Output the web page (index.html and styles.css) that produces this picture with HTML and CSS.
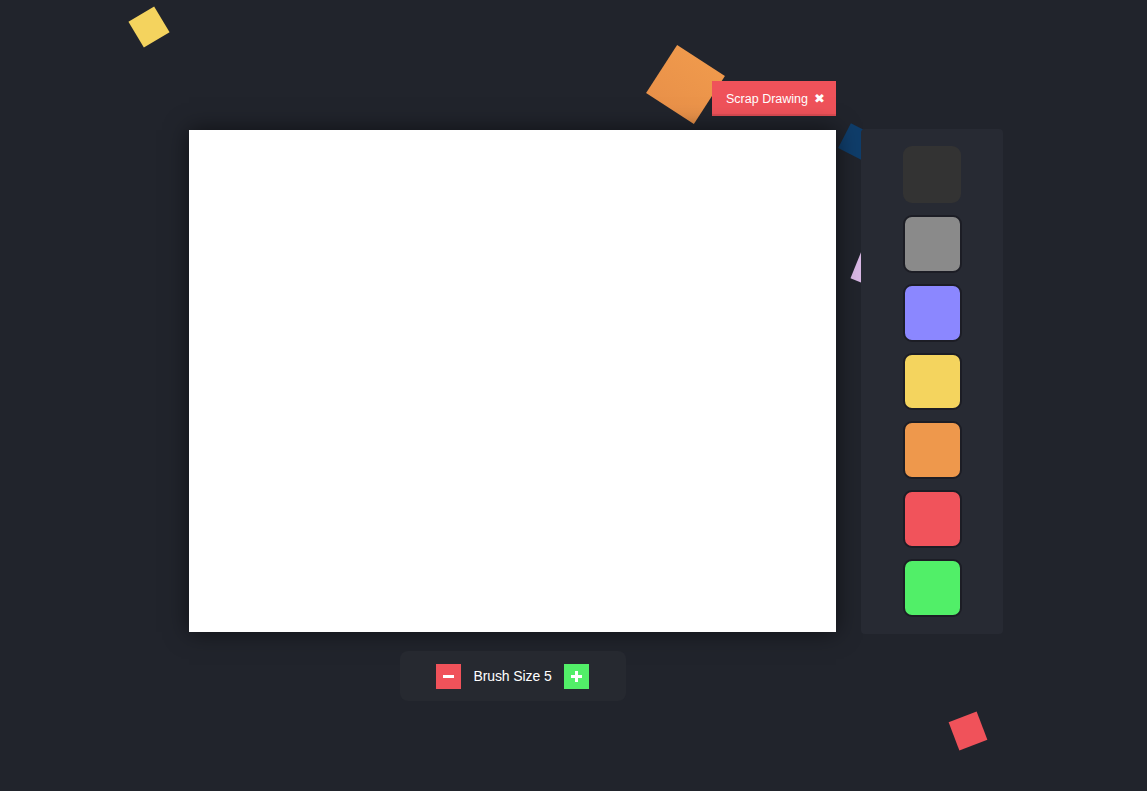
FILE: index.html
```html
<!DOCTYPE html>
<html lang="en">
<head>
<meta charset="utf-8">
<title>Drawing</title>
<link rel="stylesheet" href="styles.css">
</head>
<body>
<div class="shapes">
  <div class="shape shape-yellow"></div>
  <div class="shape shape-orange"></div>
  <div class="shape shape-blue"></div>
  <div class="shape shape-lilac"></div>
  <div class="shape shape-red"></div>
</div>
<main class="app">
  <section class="board">
    <button class="scrap">Scrap Drawing <span class="scrap-x">&#10006;</span></button>
    <div class="canvas"></div>
    <div class="brush">
      <button class="brush-btn minus" aria-label="decrease"><span class="bar"></span></button>
      <span class="brush-label">Brush Size 5</span>
      <button class="brush-btn plus" aria-label="increase"><span class="bar"></span><span class="bar vertical"></span></button>
    </div>
  </section>
  <aside class="palette">
    <div class="swatch sw-dark selected"></div>
    <div class="swatch sw-grey"></div>
    <div class="swatch sw-purple"></div>
    <div class="swatch sw-yellow"></div>
    <div class="swatch sw-orange"></div>
    <div class="swatch sw-red"></div>
    <div class="swatch sw-green"></div>
  </aside>
</main>
</body>
</html>
```

FILE: styles.css
```css
html, body {
  margin: 0;
  padding: 0;
}
body {
  background: #21242c;
  width: 1147px;
  height: 791px;
  overflow: hidden;
  font-family: "Liberation Sans", Arial, sans-serif;
  position: relative;
}

.shapes {
  position: absolute;
  inset: 0;
  z-index: 0;
}
.shape {
  position: absolute;
}
.shape-yellow {
  left: 134px;
  top: 12px;
  width: 30px;
  height: 30px;
  background: #f4d35e;
  transform: rotate(-31deg);
}
.shape-orange {
  left: 657px;
  top: 56px;
  width: 57px;
  height: 57px;
  background: linear-gradient(#ef994c, #e99149);
  transform: rotate(33deg);
}
.shape-blue {
  left: 843px;
  top: 128px;
  width: 28px;
  height: 28px;
  background: #0f3d6a;
  transform: rotate(27deg);
}
.shape-lilac {
  left: 855px;
  top: 255px;
  width: 30px;
  height: 30px;
  background: #dab9e6;
  transform: rotate(22deg);
}
.shape-red {
  left: 953px;
  top: 716px;
  width: 30px;
  height: 30px;
  background: #f0525a;
  transform: rotate(-21deg);
}

.app {
  position: relative;
  z-index: 1;
  display: flex;
  align-items: flex-start;
  gap: 25px;
  padding: 81px 0 0 189px;
}

.board {
  display: flex;
  flex-direction: column;
  width: 647px;
}

.scrap {
  align-self: flex-end;
  height: 35px;
  width: 124px;
  margin: 0 0 14px 0;
  padding: 0 0 0 14px;
  border: none;
  background: #ef525a;
  box-shadow: inset 0 -2px 0 rgba(0, 0, 0, 0.08);
  color: #ffffff;
  font-family: "Liberation Sans", Arial, sans-serif;
  font-size: 12.5px;
  text-align: left;
  display: flex;
  align-items: center;
  gap: 6px;
  cursor: pointer;
}
.scrap-x {
  font-size: 13px;
  font-family: "DejaVu Sans", sans-serif;
}

.canvas {
  width: 647px;
  height: 502px;
  background: #ffffff;
  box-shadow: 0 0 22px rgba(0, 0, 0, 0.55);
}

.brush {
  align-self: center;
  margin-top: 19px;
  width: 226px;
  height: 50px;
  box-sizing: border-box;
  background: #262930;
  border-radius: 8px;
  display: flex;
  align-items: center;
  justify-content: center;
  gap: 12px;
}
.brush-label {
  color: #ffffff;
  font-size: 14px;
  letter-spacing: -0.1px;
}
.brush-btn {
  position: relative;
  width: 25px;
  height: 25px;
  padding: 0;
  border: none;
  cursor: pointer;
}
.brush-btn.minus {
  background: #f0525a;
}
.brush-btn.plus {
  background: #52ef68;
}
.bar {
  position: absolute;
  left: 7px;
  top: 11px;
  width: 11px;
  height: 3px;
  background: #ffffff;
}
.bar.vertical {
  left: 11px;
  top: 7px;
  width: 3px;
  height: 11px;
}

.palette {
  margin-top: 48px;
  width: 142px;
  height: 505px;
  box-sizing: border-box;
  padding: 17px 0;
  background: #272a33;
  border-radius: 4px;
  display: flex;
  flex-direction: column;
  align-items: center;
  gap: 11px;
}
.swatch {
  width: 59px;
  height: 59px;
  box-sizing: border-box;
  border-radius: 9px;
  border: 2px solid #1c1d25;
}
.swatch.selected {
  width: 58px;
  height: 58px;
  border-color: transparent;
  margin-bottom: 1px;
}
.sw-dark { background: #333333; }
.sw-grey { background: #8a8a8a; }
.sw-purple { background: #8b87ff; }
.sw-yellow { background: #f4d45e; }
.sw-orange { background: #ee984c; }
.sw-red { background: #f1535b; }
.sw-green { background: #51ef68; }
```
